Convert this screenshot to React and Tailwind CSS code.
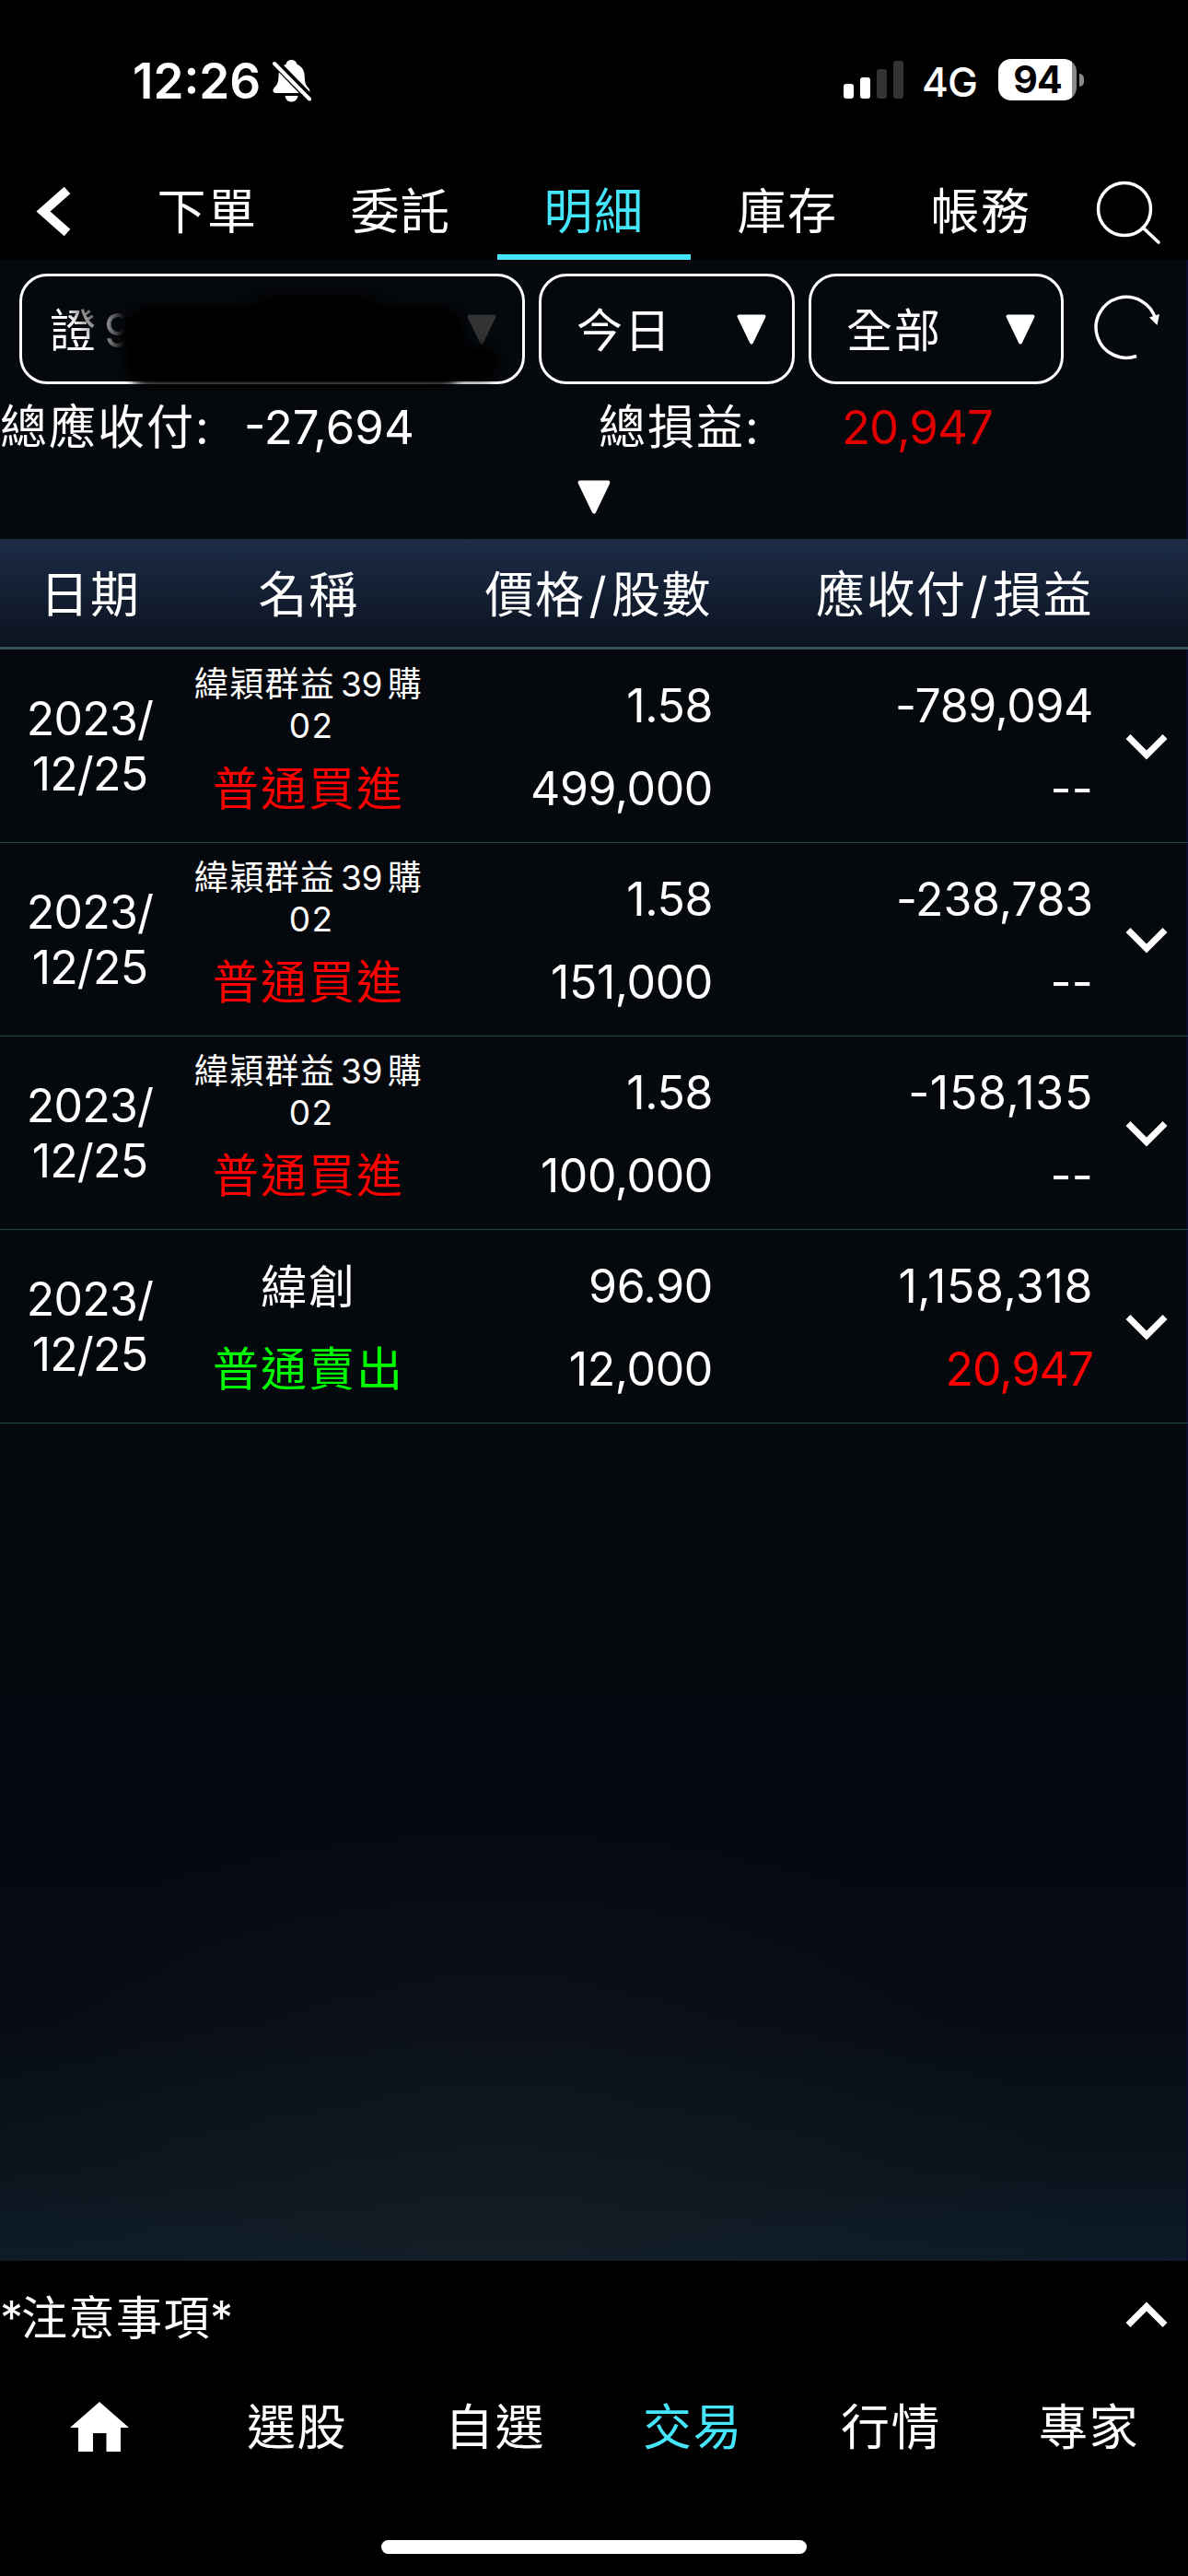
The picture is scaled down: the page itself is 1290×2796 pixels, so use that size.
import React from 'react';

const tabs = ['下單', '委託', '明細', '庫存', '帳務'];
const navItems = ['選股', '自選', '交易', '行情', '專家'];

const rows = [
    { warrant: true, side: 'buy', price: '1.58', shares: '499,000', amount: '-789,094', profit: '--', spacing: 'tracking-[-0.4px]' },
    { warrant: true, side: 'buy', price: '1.58', shares: '151,000', amount: '-238,783', profit: '--', spacing: 'tracking-[-0.2px]' },
    { warrant: true, side: 'buy', price: '1.58', shares: '100,000', amount: '-158,135', profit: '--', spacing: 'tracking-[0.7px]' },
    { warrant: false, side: 'sell', price: '96.90', shares: '12,000', amount: '1,158,318', profit: '20,947', spacing: 'tracking-[0.6px]' },
];

const Triangle = ({ className }) => (
    <svg viewBox="0 0 32 33" className={className} fill="currentColor" stroke="currentColor" strokeWidth="4" strokeLinejoin="round">
        <path d="M2.5 2.5h27L16 30.5z" />
    </svg>
);

const Chevron = ({ className }) => (
    <svg viewBox="0 0 46 28" className={className} fill="none" stroke="currentColor" strokeWidth="7">
        <path d="M3 2.5 23 22.5 43 2.5" />
    </svg>
);

const StatusBar = () => (
    <div className="flex h-[177px] items-start pl-[144px] text-white">
        <div className="mt-[57px] w-[152px] text-[53px] font-semibold leading-[62px]">12:26</div>
        {/* Silent mode bell */}
        <svg viewBox="0 0 42 46" className="mt-[65px] h-[46px] w-[42px]">
            <path fill="#fff" d="M20.500 0c3 0 5.500 1.800 6 4.800C32 7 34.500 12 34.700 17c.3 8 1 10 4.300 13.500 2 2 2 5.500-1 5.500H3.500c-3.500 0-4-3.500-1.500-6 4-4 4.300-7 4.500-13C6.700 11 10 6.500 14.500 4.800c.5-3 3-4.800 6-4.800zM13.500 39h14c-.8 4.500-3.500 6.500-7 6.500s-6.200-2-7-6.500z" />
            <path stroke="#000" strokeWidth="9" d="M-1-1 40 41" />
            <path stroke="#fff" strokeWidth="4" strokeLinecap="round" d="M2 4 40 42.500" />
        </svg>
        {/* Signal, network, battery */}
        <div className="ml-[578px] mt-[66px] flex h-[41px] items-end gap-[7px]">
            <div className="h-4 w-[11px] rounded-[3px] bg-white" />
            <div className="h-[23px] w-[11px] rounded-[3px] bg-white" />
            <div className="h-8 w-[11px] rounded-[3px] bg-[#333]" />
            <div className="h-[41px] w-[11px] rounded-[3px] bg-[#333]" />
        </div>
        <div className="ml-[20px] mt-[62px] w-[83px] text-[44px] font-medium leading-[54px] tracking-[-1px]">4G</div>
        <div className="mt-16 h-[45px] w-[85px] rounded-[14px] bg-linear-to-r from-white from-94% to-[#8a8a8a] to-94% text-center text-[41px] font-bold leading-[45px] tracking-[-1px] text-black">
            94
        </div>
        <div className="ml-[3px] mt-20 h-[14px] w-[5px] rounded-r-full bg-[#8a8a8a]" />
    </div>
);

const TopTabs = () => (
    <div className="flex h-[105px] items-stretch">
        <div className="flex w-[120px] pl-[38px] pt-[26px]">
            <svg viewBox="0 0 40 53" className="h-[53px] w-10" fill="none" stroke="#fff" strokeWidth="10">
                <path d="M35 3.500 9 26.500l26 23" />
            </svg>
        </div>
        {tabs.map((tab) => (
            <div
                key={tab}
                className={
                    tab === '明細'
                        ? 'w-[210px] border-b-[6px] border-[#45e6fb] pt-[17px] text-center text-[53px] leading-[72px] tracking-[1.5px] text-[#45e6fb]'
                        : 'w-[210px] pt-[17px] text-center text-[53px] leading-[72px] tracking-[1.5px] text-white'
                }
            >
                {tab}
            </div>
        ))}
        <svg viewBox="0 0 70 70" className="ml-[20px] mt-[19px] h-[70px] w-[70px]" fill="none" stroke="#fff" strokeWidth="3.500">
            <circle cx="31" cy="31" r="28.500" />
            <path d="M51 51 68 67" strokeLinecap="round" />
        </svg>
    </div>
);

const Filters = () => (
    <div className="flex h-[120px] pl-[21px] text-[50px] leading-[70px] text-white">
        <div className="relative flex w-[549px] items-center rounded-[30px] border-[3px] border-white pl-[30px] pt-[3px]">
            <span className="bg-linear-to-bl from-[#777] from-20% to-white to-45% bg-clip-text text-transparent">證</span>
            <span className="ml-[9px] bg-linear-to-r from-[#aaa] to-black to-90% bg-clip-text text-transparent">9</span>
            <Triangle className="absolute left-[483px] top-[41px] h-[33px] w-8 text-[#333]" />
            {/* Account number mask */}
            <div className="absolute left-[112px] top-[32px] h-[88px] w-[368px] rounded-[26px] bg-black blur-[5px]" />
            <div className="absolute left-[250px] top-[20px] h-10 w-[140px] rounded-full bg-black blur-[7px]" />
            <div className="absolute left-[450px] top-[76px] h-9 w-[68px] rounded-full bg-black blur-[6px]" />
        </div>
        <div className="ml-[15px] flex w-[278px] items-center justify-between rounded-[30px] border-[3px] border-white pl-[38px] pr-[28px]">
            <span className="pt-[3px] tracking-[2px]">今日</span>
            <Triangle className="h-[33px] w-8" />
        </div>
        <div className="ml-[15px] flex w-[277px] items-center justify-between rounded-[30px] border-[3px] border-white pl-[38px] pr-[28px]">
            <span className="pt-[3px] tracking-[2px]">全部</span>
            <Triangle className="h-[33px] w-8" />
        </div>
        <svg viewBox="0 0 72 72" className="ml-[33px] mt-[23px] h-[72px] w-[72px]" fill="none" stroke="#fff" strokeWidth="3.500">
            <path d="M46 66.500A33 33 0 1 1 67 27" />
            <path d="M60 24.500 71 21 68.500 33z" fill="#fff" stroke="none" />
        </svg>
    </div>
);

const Summary = () => (
    <div className="h-[168px]">
        <div className="flex h-[104px] pt-[11px] text-[51px] leading-[72px] text-white">
            <div className="w-[265px] tracking-[2px]">總應收付:</div>
            <div className="w-[385px]">-27,694</div>
            <div className="w-[264px] tracking-[2px]">總損益:</div>
            <div className="tracking-[-1px] text-[#e00000]">20,947</div>
        </div>
        <Triangle className="mx-auto h-[37px] w-9 text-white" />
    </div>
);

const TableHeader = () => (
    <div className="flex h-[120px] border-b-[3px] border-[#364f5c] bg-linear-to-b from-[#1c2c47] to-[#0c1320] pt-[25px] text-[53px] leading-[72px] tracking-[1.5px] text-white">
        <div className="w-[196px] text-center">日期</div>
        <div className="w-[278px] text-center">名稱</div>
        <div className="w-[299px] text-right">
            價格<span className="mx-[4px]">/</span>股數
        </div>
        <div className="w-[414px] text-right">
            應收付<span className="mx-[4px]">/</span>損益
        </div>
    </div>
);

const Row = ({ row }) => (
    <div className="flex h-[210px] border-b border-[#22444c] text-[50px] leading-[60px] text-white">
        <div className="w-[195px] pt-[45px] text-center tracking-[-0.8px]">
            2023/
            <br />
            12/25
        </div>
        <div className="w-[280px] text-center">
            {row.warrant ? (
                <div className="h-[121px] pt-[15px] text-[37px] leading-[45px] tracking-[1.300px]">
                    緯穎群益<span className="mx-[6px] tracking-[-0.5px]">39</span>購
                    <br />
                    <span className="ml-1.5">02</span>
                </div>
            ) : (
                <div className="h-[121px] pt-[32px] tracking-[2px]">緯創</div>
            )}
            <div className={row.side === 'buy' ? 'tracking-[2px] text-[#ff0000]' : 'tracking-[2px] text-[#00ff00]'}>
                {row.side === 'buy' ? '普通買進' : '普通賣出'}
            </div>
        </div>
        <div className="w-[299px] pt-[31px] text-right">
            <div className="h-[90px] tracking-[-0.4px]">{row.price}</div>
            <div className="tracking-[-0.4px]">{row.shares}</div>
        </div>
        <div className="w-[413px] pt-[31px] text-right">
            <div className="h-[90px]">
                <span className={row.spacing}>{row.amount}</span>
            </div>
            <div className={row.profit === '--' ? 'tracking-[0.2px]' : 'tracking-[-1px] text-[#ff0000]'}>{row.profit}</div>
        </div>
        <Chevron className="ml-[35px] mt-[92px] h-[28px] w-[46px]" />
    </div>
);

const BottomBar = () => (
    <div className="h-[342px] bg-black text-white">
        <div className="flex h-[118px] justify-between pr-[22px] pt-[27px] text-[50px] leading-[70px] tracking-[1.500px]">
            <div>
                <span className="tracking-[-2px]">*</span>注意事項<span className="-ml-[1px]">*</span>
            </div>
            <Chevron className="mt-[17px] h-[28px] w-[46px] rotate-180" />
        </div>
        <div className="flex h-[185px] pt-[27px] text-[53px] leading-[72px] tracking-[1.5px]">
            <div className="flex w-[215px] justify-center pt-[8px]">
                <svg viewBox="0 0 64 54" className="h-[54px] w-16" fill="#fff">
                    <path d="M32 0 64 28H55V54H39.500V34H25V54H9V28H0z" />
                </svg>
            </div>
            {navItems.map((item) => (
                <div key={item} className={item === '交易' ? 'w-[215px] text-center text-[#45e6fb]' : 'w-[215px] text-center'}>
                    {item}
                </div>
            ))}
        </div>
        <div className="mx-auto h-[15px] w-[462px] rounded-full bg-white" />
    </div>
);

const App = () => {
    return (
        <div className="flex h-[2796px] w-[1290px] flex-col overflow-hidden bg-black font-['Inter','Noto_Sans_CJK_TC',sans-serif]">
            <StatusBar />
            <TopTabs />
            <div className="flex-1 bg-[radial-gradient(ellipse_620px_520px_at_42%_100%,#1b212670,transparent),linear-gradient(to_bottom,#05080c_60%,#05080f_78%,#070c14_88%,#0a131c_95%,#0d1c28)] pt-[15px] shadow-[inset_-2px_0_0_#0b0b2c]">
                <Filters />
                <Summary />
                <TableHeader />
                {rows.map((row) => (
                    <Row key={row.amount} row={row} />
                ))}
            </div>
            <BottomBar />
        </div>
    );
};

export default App;
